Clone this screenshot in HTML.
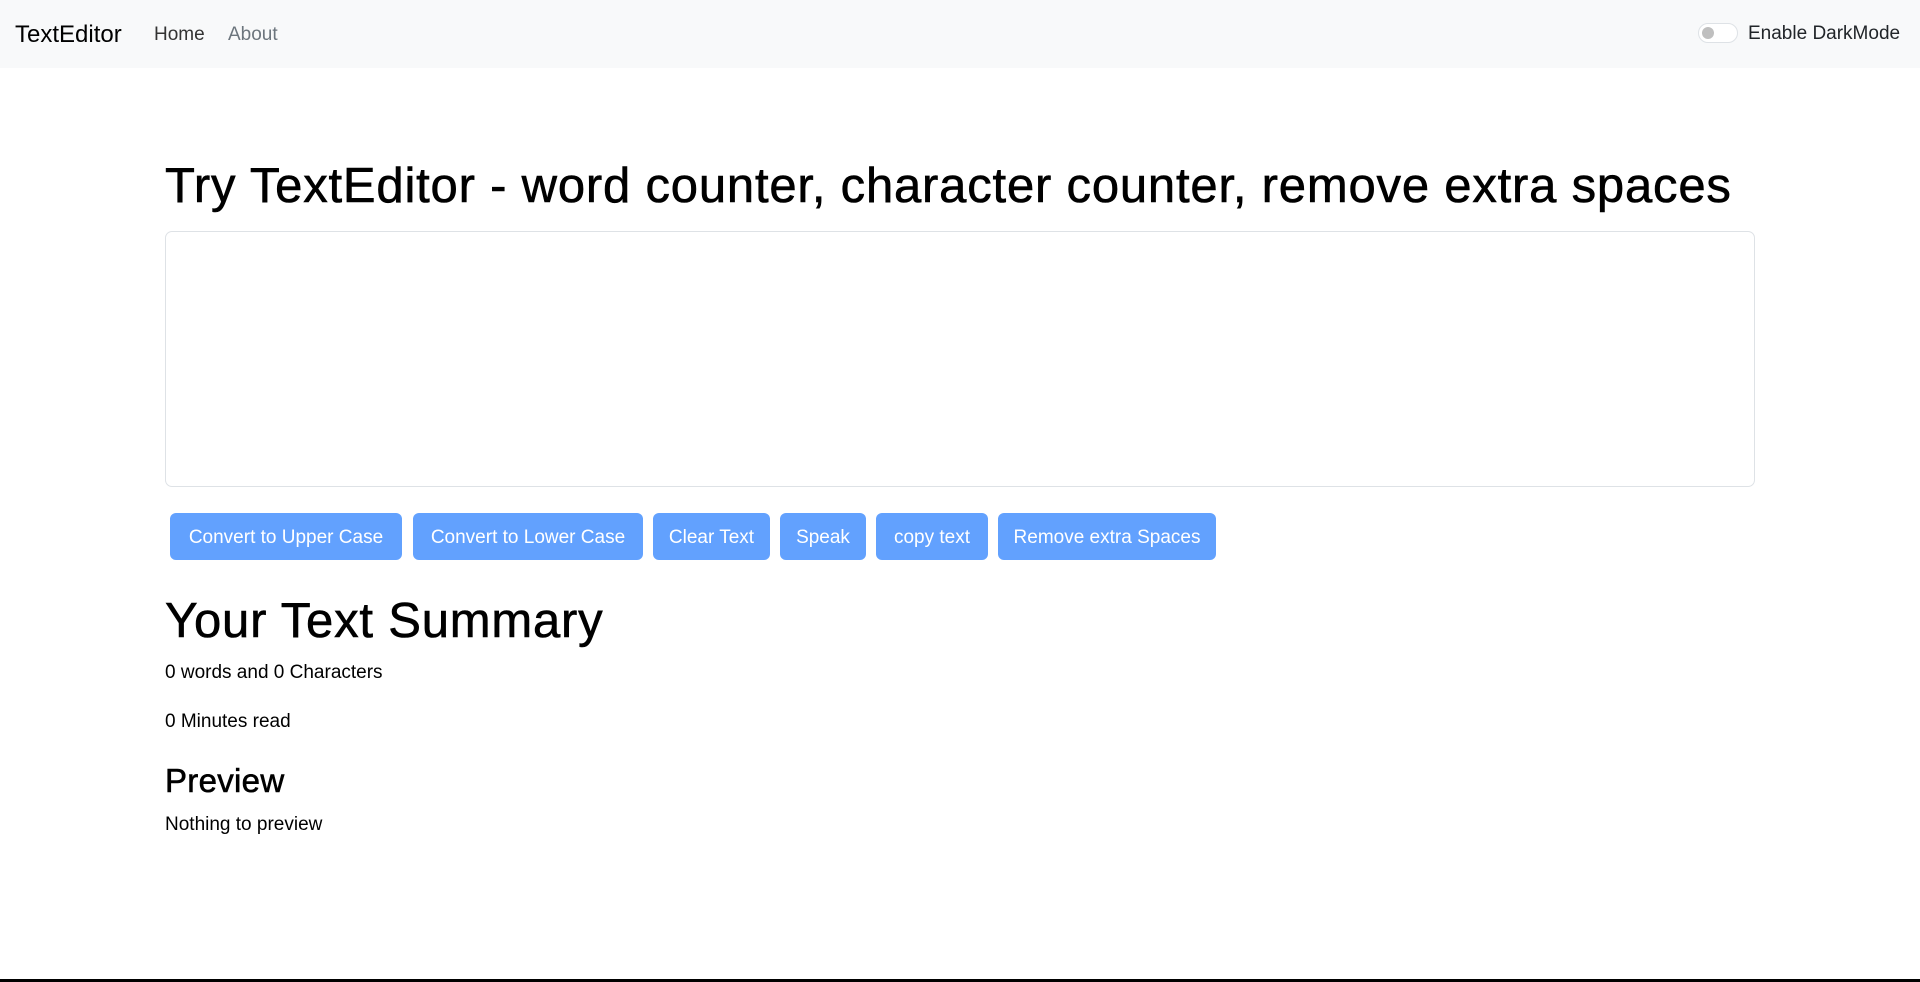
<!DOCTYPE html>
<html><head><meta charset="utf-8"><style>
*{box-sizing:border-box;margin:0;padding:0}
body{width:1920px;height:982px;background:#fff;font-family:"Liberation Sans",sans-serif;color:#212529;position:relative;overflow:hidden}
.nav{position:absolute;left:0;top:0;width:1920px;height:68px;background:#f8f9fa}
.a{position:absolute;white-space:nowrap}
.btn{position:absolute;top:513px;height:47px;background:#62a1fe;color:#fff;border-radius:6px;font-size:19px;line-height:49px;text-align:center}
.h{letter-spacing:0.8px;-webkit-text-stroke:0.6px #000}
</style></head><body>
<div class="nav">
<div class="a" style="left:15px;top:21px;font-size:24px;color:#000">TextEditor</div>
<div class="a" style="left:154px;top:24px;font-size:19px;color:#333">Home</div>
<div class="a" style="left:228px;top:24px;font-size:19px;color:#6c757d">About</div>
<div class="a" style="left:1698px;top:23px;width:40px;height:20px;border:1px solid #dee2e6;border-radius:10px;background:#fff"><div style="position:absolute;left:3px;top:3px;width:12px;height:12px;border-radius:50%;background:#bfbfbf"></div></div>
<div class="a" style="left:1748px;top:23px;font-size:19px;color:#212529">Enable DarkMode</div>
</div>
<div class="a h" style="left:165px;top:156px;font-size:49px;color:#000;line-height:60px">Try TextEditor - word counter, character counter, remove extra spaces</div>
<div class="a" style="left:165px;top:231px;width:1590px;height:256px;border:1px solid #dee2e6;border-radius:7px"></div>
<div class="btn" style="left:170px;width:232px">Convert to Upper Case</div>
<div class="btn" style="left:413px;width:230px">Convert to Lower Case</div>
<div class="btn" style="left:653px;width:117px">Clear Text</div>
<div class="btn" style="left:780px;width:86px">Speak</div>
<div class="btn" style="left:876px;width:112px">copy text</div>
<div class="btn" style="left:998px;width:218px">Remove extra Spaces</div>
<div class="a h" style="left:165px;top:591px;font-size:49px;color:#000;line-height:60px">Your Text Summary</div>
<div class="a" style="left:165px;top:662px;font-size:19px;color:#000">0 words and 0 Characters</div>
<div class="a" style="left:165px;top:711px;font-size:19px;color:#000">0 Minutes read</div>
<div class="a h" style="left:165px;top:760px;font-size:33px;color:#000;line-height:42px;letter-spacing:0.3px">Preview</div>
<div class="a" style="left:165px;top:814px;font-size:19px;color:#000">Nothing to preview</div>
<div class="a" style="left:0;top:979px;width:1920px;height:3px;background:#000"></div>
</body></html>
